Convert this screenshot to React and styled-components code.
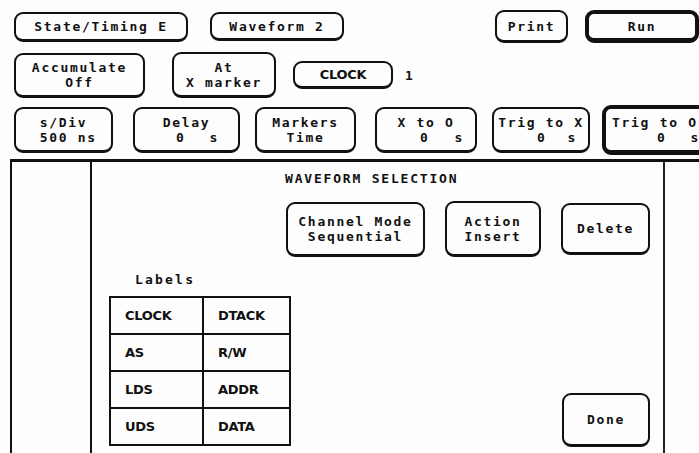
import React from 'react';
import styled, { createGlobalStyle } from 'styled-components';

const Global = createGlobalStyle`
  html, body {
    margin: 0;
    padding: 0;
    background: #fff;
  }
  body {
    font-family: "DejaVu Sans Mono", "Liberation Mono", monospace;
    color: #111;
  }
`;

const Screen = styled.div`
  width: 699px;
  height: 453px;
  overflow: hidden;
  background: #fdfdfd;
  display: flex;
  flex-direction: column;
`;

const Header = styled.div`
  padding-left: 14px;
  display: flex;
  flex-direction: column;
`;

const Row = styled.div`
  display: flex;
  align-items: center;
  height: ${(p) => p.$h}px;
  margin-top: ${(p) => p.$top}px;
`;

const Key = styled.div`
  box-sizing: border-box;
  flex: none;
  width: ${(p) => p.$w}px;
  height: ${(p) => p.$h}px;
  margin-left: ${(p) => p.$ml || 0}px;
  border: ${(p) => (p.$thick ? '4px' : '2px')} solid #111;
  border-bottom-width: ${(p) => (p.$thick ? '5px' : '3px')};
  border-radius: 9px;
  display: flex;
  flex-direction: column;
  justify-content: center;
  gap: 2px;
  font-weight: bold;
  font-size: 13px;
  letter-spacing: 1.7px;
  line-height: 13px;
  white-space: pre;
`;

const Line = styled.div`
  text-align: ${(p) => (p.$left ? 'left' : 'center')};
  padding-left: ${(p) => (p.$left ? 6 : 0)}px;
`;

const Value = styled.div`
  display: flex;
  justify-content: flex-end;
  gap: ${(p) => p.$gap || 24}px;
  padding-right: ${(p) => p.$pr || 12}px;
`;

const SansKey = styled.span`
  font-family: "DejaVu Sans", "Liberation Sans", sans-serif;
  font-size: 13px;
  letter-spacing: -0.3px;
  text-align: center;
`;

const Note = styled.span`
  margin-left: 12px;
  font-weight: bold;
  font-size: 13px;
`;

const Spacer = styled.div`
  flex: 1;
`;

const Frame = styled.div`
  flex: 1;
  margin-top: 4px;
  margin-left: 10px;
  border-top: 3px solid #111;
  display: grid;
  grid-template-columns: 82px 573px 1fr;
`;

const SidePanel = styled.div`
  box-sizing: border-box;
  border-left: 2px solid #111;
  border-right: 2px solid #111;
`;

const Main = styled.div`
  box-sizing: border-box;
  border-right: 2px solid #222;
  padding: 9px 13px 6px 17px;
  display: flex;
  flex-direction: column;
`;

const Title = styled.div`
  font-weight: bold;
  font-size: 13px;
  letter-spacing: 1.8px;
  line-height: 16px;
  padding-left: 176px;
`;

const Actions = styled.div`
  display: flex;
  justify-content: flex-end;
  align-items: center;
  gap: 20px;
  margin-top: 14px;
`;

const Bottom = styled.div`
  flex: 1;
  display: flex;
  align-items: flex-end;
  justify-content: space-between;
`;

const LabelBlock = styled.div`
  display: flex;
  flex-direction: column;
`;

const Caption = styled.div`
  font-weight: bold;
  font-size: 13px;
  letter-spacing: 2.2px;
  line-height: 16px;
  padding-left: 26px;
  margin-bottom: 8px;
`;

const Table = styled.div`
  box-sizing: border-box;
  width: 182px;
  border: 2px solid #111;
  display: grid;
  grid-template-columns: 93px 1fr;
  margin-bottom: 1px;
`;

const Cell = styled.div`
  box-sizing: border-box;
  height: ${(p) => (p.$last ? 35 : 37)}px;
  border-bottom: ${(p) => (p.$last ? 'none' : '2px solid #111')};
  border-right: ${(p) => (p.$left ? '2px solid #111' : 'none')};
  padding-left: 14px;
  display: flex;
  align-items: center;
  font-family: "DejaVu Sans", "Liberation Sans", sans-serif;
  font-weight: bold;
  font-size: 13px;
  letter-spacing: -0.3px;
`;

const labels = [
  ['CLOCK', 'DTACK'],
  ['AS', 'R/W'],
  ['LDS', 'ADDR'],
  ['UDS', 'DATA'],
];

export default function App() {
  return (
    <Screen>
      <Global />
      <Header>
        <Row $h={33} $top={10}>
          <Key $w={174} $h={30}><Line>State/Timing E</Line></Key>
          <Key $w={134} $h={29} $ml={22}><Line>Waveform 2</Line></Key>
          <Spacer />
          <Key $w={73} $h={33}><Line>Print</Line></Key>
          <Key $w={114} $h={33} $ml={17} $thick><Line>Run</Line></Key>
        </Row>
        <Row $h={46} $top={9}>
          <Key $w={131} $h={45}>
            <Line>Accumulate</Line>
            <Line>Off</Line>
          </Key>
          <Key $w={104} $h={46} $ml={27}>
            <Line>At</Line>
            <Line>X marker</Line>
          </Key>
          <Key $w={100} $h={28} $ml={17}>
            <SansKey>CLOCK</SansKey>
          </Key>
          <Note>1</Note>
        </Row>
        <Row $h={50} $top={7}>
          <Key $w={99} $h={46}>
            <Line>s/Div</Line>
            <Line> 500 ns</Line>
          </Key>
          <Key $w={107} $h={46} $ml={20}>
            <Line>Delay</Line>
            <Value $pr={19} $gap={24}><span>0</span><span>s</span></Value>
          </Key>
          <Key $w={101} $h={46} $ml={15}>
            <Line>Markers</Line>
            <Line>Time</Line>
          </Key>
          <Key $w={102} $h={46} $ml={19}>
            <Line>X to O</Line>
            <Value $pr={11} $gap={25}><span>0</span><span>s</span></Value>
          </Key>
          <Key $w={98} $h={46} $ml={15}>
            <Line>Trig to X</Line>
            <Value $pr={11} $gap={21}><span>0</span><span>s</span></Value>
          </Key>
          <Key $w={120} $h={50} $ml={12} $thick>
            <Line $left>Trig to O</Line>
            <Value $pr={18} $gap={24}><span>0</span><span>s</span></Value>
          </Key>
        </Row>
      </Header>
      <Frame>
        <SidePanel />
        <Main>
          <Title>WAVEFORM SELECTION</Title>
          <Actions>
            <Key $w={139} $h={55}>
              <Line>Channel Mode</Line>
              <Line>Sequential</Line>
            </Key>
            <Key $w={96} $h={56}>
              <Line>Action</Line>
              <Line>Insert</Line>
            </Key>
            <Key $w={89} $h={52}>
              <Line>Delete</Line>
            </Key>
          </Actions>
          <Bottom>
            <LabelBlock>
              <Caption>Labels</Caption>
              <Table>
                {labels.map((pair, i) => (
                  <React.Fragment key={pair[0]}>
                    <Cell $left $last={i === labels.length - 1}>{pair[0]}</Cell>
                    <Cell $last={i === labels.length - 1}>{pair[1]}</Cell>
                  </React.Fragment>
                ))}
              </Table>
            </LabelBlock>
            <Key $w={88} $h={54}>
              <Line>Done</Line>
            </Key>
          </Bottom>
        </Main>
        <div />
      </Frame>
    </Screen>
  );
}
